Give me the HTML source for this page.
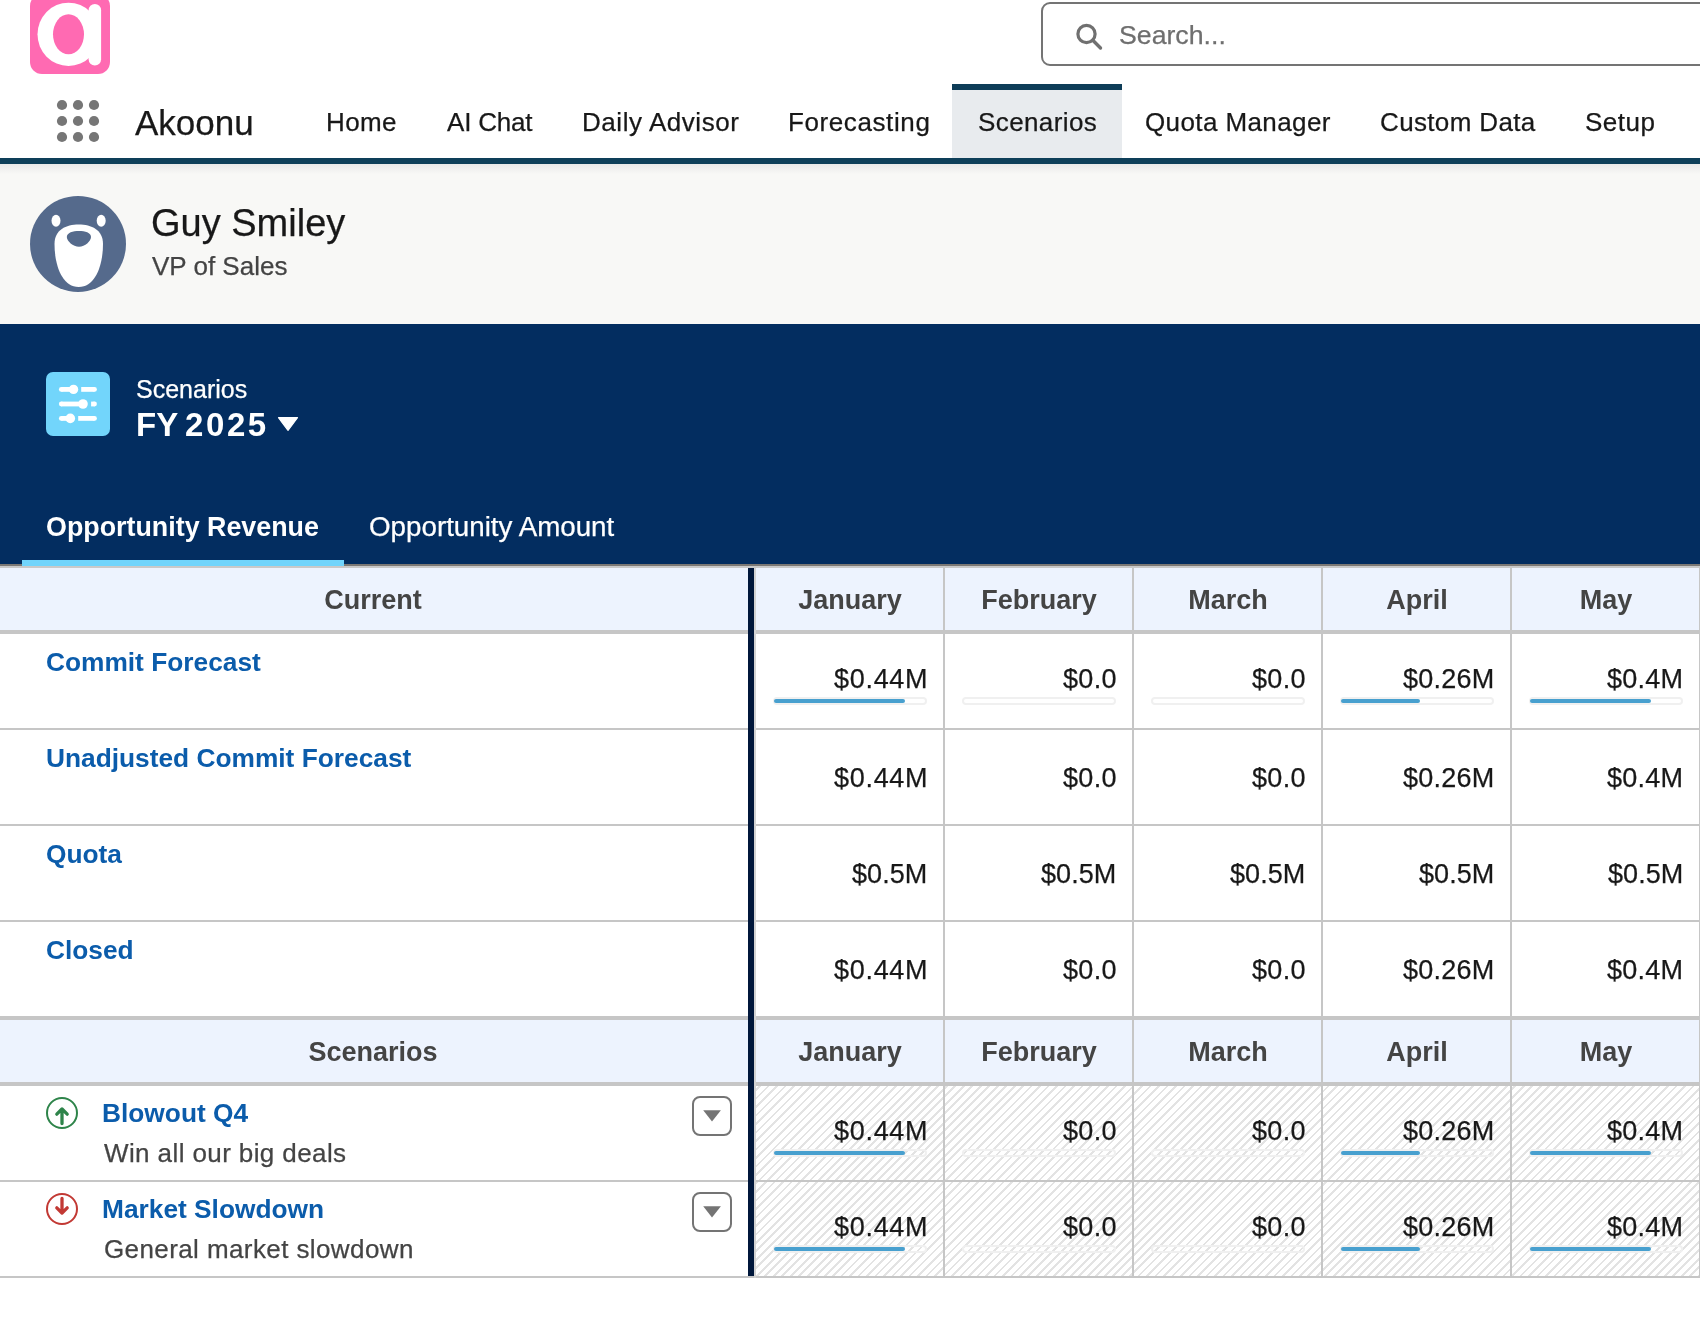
<!DOCTYPE html>
<html><head><meta charset="utf-8"><title>Scenarios</title>
<style>
html,body{margin:0;padding:0;}
body{width:1700px;height:1342px;position:relative;overflow:hidden;background:#fff;font-family:"Liberation Sans", sans-serif;}
.t{position:absolute;white-space:nowrap;will-change:transform;}
.t.n{-webkit-text-stroke:0.25px currentColor;}
svg{display:block}
</style></head><body>
<svg style="position:absolute;left:30px;top:-6px" width="80" height="80" viewBox="0 0 80 80">
<rect x="0" y="0" width="80" height="80" rx="12" fill="#ff6ab2"/>
<ellipse cx="38.5" cy="40.3" rx="31" ry="31.6" fill="#fff"/>
<ellipse cx="38.5" cy="40.3" rx="15.5" ry="20" fill="#ff6ab2"/>
<rect x="58.6" y="9.9" width="12.5" height="61.7" rx="6.25" fill="#fff"/>
</svg>
<div style="position:absolute;left:1041px;top:2px;width:700px;height:60px;border:2px solid #747474;border-radius:9px;background:#fff"></div>
<svg style="position:absolute;left:1070px;top:18px" width="40" height="40" viewBox="0 0 40 40">
<circle cx="16.5" cy="16" r="8.6" fill="none" stroke="#707070" stroke-width="3.2"/>
<line x1="22.8" y1="22.3" x2="30.5" y2="30" stroke="#707070" stroke-width="3.4" stroke-linecap="round"/>
</svg>
<div class="t n" style="left:1119.00px;top:22.00px;font-size:26.7px;line-height:26.7px;color:#6f6f6f;font-weight:normal;">Search...</div>
<svg style="position:absolute;left:0;top:0" width="120" height="160"><circle cx="62" cy="105" r="5.1" fill="#767676"/><circle cx="78" cy="105" r="5.1" fill="#767676"/><circle cx="94" cy="105" r="5.1" fill="#767676"/><circle cx="62" cy="121" r="5.1" fill="#767676"/><circle cx="78" cy="121" r="5.1" fill="#767676"/><circle cx="94" cy="121" r="5.1" fill="#767676"/><circle cx="62" cy="137" r="5.1" fill="#767676"/><circle cx="78" cy="137" r="5.1" fill="#767676"/><circle cx="94" cy="137" r="5.1" fill="#767676"/></svg>
<div class="t n" style="left:135.00px;top:105.37px;font-size:35px;line-height:35px;color:#181818;font-weight:normal;">Akoonu</div>
<div style="position:absolute;left:952px;top:84px;width:170px;height:74px;background:#e8ebee"></div>
<div style="position:absolute;left:952px;top:84px;width:170px;height:6px;background:#0e3d58"></div>
<div class="t n" style="left:326.40px;top:109.19px;font-size:26px;line-height:26px;color:#181818;font-weight:normal;letter-spacing:0.4px;">Home</div>
<div class="t n" style="left:446.50px;top:109.19px;font-size:26px;line-height:26px;color:#181818;font-weight:normal;letter-spacing:-0.2px;">AI Chat</div>
<div class="t n" style="left:581.80px;top:109.19px;font-size:26px;line-height:26px;color:#181818;font-weight:normal;letter-spacing:0.55px;">Daily Advisor</div>
<div class="t n" style="left:787.70px;top:109.19px;font-size:26px;line-height:26px;color:#181818;font-weight:normal;letter-spacing:0.6px;">Forecasting</div>
<div class="t n" style="left:977.80px;top:109.19px;font-size:26px;line-height:26px;color:#181818;font-weight:normal;letter-spacing:0.4px;">Scenarios</div>
<div class="t n" style="left:1144.90px;top:109.19px;font-size:26px;line-height:26px;color:#181818;font-weight:normal;letter-spacing:0.4px;">Quota Manager</div>
<div class="t n" style="left:1379.70px;top:109.19px;font-size:26px;line-height:26px;color:#181818;font-weight:normal;letter-spacing:0.35px;">Custom Data</div>
<div class="t n" style="left:1585.00px;top:109.19px;font-size:26px;line-height:26px;color:#181818;font-weight:normal;letter-spacing:0.5px;">Setup</div>
<div style="position:absolute;left:0;top:158px;width:1700px;height:6px;background:#0e3f59"></div>
<div style="position:absolute;left:0;top:164px;width:1700px;height:160px;background:#f8f8f6"></div>
<div style="position:absolute;left:0;top:164px;width:1700px;height:10px;background:linear-gradient(#e9e9e8,#f8f8f6)"></div>
<svg style="position:absolute;left:28px;top:194px" width="100" height="100" viewBox="0 0 100 100">
<circle cx="50" cy="49.9" r="48" fill="#556a8c"/>
<ellipse cx="28" cy="26.8" rx="4.5" ry="6" fill="#fff"/>
<ellipse cx="73.2" cy="26.8" rx="4.5" ry="6" fill="#fff"/>
<path d="M26.5 50 C26.5 36 38 30.6 50.7 30.6 C63.5 30.6 75 36 75 50 C75 70 68 93 50.7 93 C33.5 93 26.5 70 26.5 50 Z" fill="#fff"/>
<path d="M38.8 43 C38.8 38.5 45 36.9 51 36.9 C57 36.9 63 38.5 63 43 C63 47 57 52.8 51 52.8 C45 52.8 38.8 47 38.8 43 Z" fill="#556a8c"/>
</svg>
<div class="t n" style="left:151.00px;top:203.83px;font-size:38px;line-height:38px;color:#181818;font-weight:normal;">Guy Smiley</div>
<div class="t n" style="left:152.00px;top:253.19px;font-size:26px;line-height:26px;color:#444;font-weight:normal;">VP of Sales</div>
<div style="position:absolute;left:0;top:324px;width:1700px;height:240px;background:#032d60"></div>
<svg style="position:absolute;left:46px;top:372px" width="64" height="64" viewBox="0 0 64 64">
<rect width="64" height="64" rx="7" fill="#72d5fb"/>
<g fill="#fff">
<circle cx="15.3" cy="17.4" r="2.4"/><rect x="15.3" y="15" width="12" height="4.8"/><circle cx="27.5" cy="17.4" r="4.7"/>
<rect x="35.2" y="15" width="13.3" height="4.8"/><circle cx="48.5" cy="17.4" r="2.4"/>
<circle cx="15.3" cy="32" r="2.4"/><rect x="15.3" y="29.6" width="21.7" height="4.8"/><circle cx="37" cy="32" r="4.8"/>
<rect x="45.1" y="29.6" width="3.4" height="4.8"/><circle cx="48.5" cy="32" r="2.4"/>
<circle cx="15.3" cy="46.4" r="2.4"/><rect x="15.3" y="44" width="9" height="4.8"/><circle cx="24.3" cy="46.4" r="4.8"/>
<rect x="32.2" y="44" width="16.3" height="4.8"/><circle cx="48.5" cy="46.4" r="2.4"/>
</g>
</svg>
<div class="t n" style="left:136.30px;top:377.04px;font-size:25px;line-height:25px;color:#fff;font-weight:normal;">Scenarios</div>
<div class="t" style="left:136.00px;top:408.07px;font-size:33px;line-height:33px;color:#fff;font-weight:bold;">FY</div>
<div class="t" style="left:184.50px;top:408.07px;font-size:33px;line-height:33px;color:#fff;font-weight:bold;letter-spacing:2.6px;">2025</div>
<svg style="position:absolute;left:276px;top:415px" width="24" height="18" viewBox="0 0 24 18">
<path d="M2.5 2.7 L21.5 2.7 L12 15.3 Z" fill="#fff" stroke="#fff" stroke-width="1.2" stroke-linejoin="round"/>
</svg>
<div class="t" style="left:46.30px;top:514.47px;font-size:26.85px;line-height:26.85px;color:#fff;font-weight:bold;">Opportunity Revenue</div>
<div class="t n" style="left:368.60px;top:512.51px;font-size:27.75px;line-height:27.75px;color:#fff;font-weight:normal;">Opportunity Amount</div>
<div style="position:absolute;left:0;top:564px;width:1700px;height:2px;background:#7b7875"></div>
<div style="position:absolute;left:0;top:566px;width:1700px;height:2px;background:#c9c9c9"></div>
<div style="position:absolute;left:22px;top:560px;width:322px;height:6px;background:#71d4fb"></div>
<div style="position:absolute;left:0;top:568px;width:1700px;height:62px;background:#edf3fe"></div>
<div style="position:absolute;left:0;top:630px;width:1700px;height:4px;background:#c6c6c6"></div>
<div class="t" style="left:-27.00px;width:800px;text-align:center;top:587.14px;font-size:27px;line-height:27px;color:#444;font-weight:bold;">Current</div>
<div class="t" style="left:449.50px;width:800px;text-align:center;top:587.14px;font-size:27px;line-height:27px;color:#444;font-weight:bold;">January</div>
<div class="t" style="left:638.50px;width:800px;text-align:center;top:587.14px;font-size:27px;line-height:27px;color:#444;font-weight:bold;">February</div>
<div class="t" style="left:827.50px;width:800px;text-align:center;top:587.14px;font-size:27px;line-height:27px;color:#444;font-weight:bold;">March</div>
<div class="t" style="left:1016.50px;width:800px;text-align:center;top:587.14px;font-size:27px;line-height:27px;color:#444;font-weight:bold;">April</div>
<div class="t" style="left:1205.50px;width:800px;text-align:center;top:587.14px;font-size:27px;line-height:27px;color:#444;font-weight:bold;">May</div>
<div class="t" style="left:46.00px;top:648.54px;font-size:26.3px;line-height:26.3px;color:#0b5cab;font-weight:bold;">Commit Forecast</div>
<div class="t n" style="right:772.00px;top:665.84px;font-size:27px;line-height:27px;color:#181818;font-weight:normal;letter-spacing:0.7px;">$0.44M</div>
<div class="t n" style="right:583.40px;top:665.84px;font-size:27px;line-height:27px;color:#181818;font-weight:normal;letter-spacing:0.3px;">$0.0</div>
<div class="t n" style="right:394.40px;top:665.84px;font-size:27px;line-height:27px;color:#181818;font-weight:normal;letter-spacing:0.3px;">$0.0</div>
<div class="t n" style="right:205.45px;top:665.84px;font-size:27px;line-height:27px;color:#181818;font-weight:normal;letter-spacing:0.25px;">$0.26M</div>
<div class="t n" style="right:16.45px;top:665.84px;font-size:27px;line-height:27px;color:#181818;font-weight:normal;letter-spacing:0.25px;">$0.4M</div>
<div style="position:absolute;left:773px;top:697px;width:154px;height:8px;box-sizing:border-box;border:2px solid #f0f0f0;border-radius:4px;background:#fff"></div>
<div style="position:absolute;left:774px;top:699px;width:131.1px;height:4px;border-radius:2px;background:#48a0cf"></div>
<div style="position:absolute;left:962px;top:697px;width:154px;height:8px;box-sizing:border-box;border:2px solid #f0f0f0;border-radius:4px;background:#fff"></div>
<div style="position:absolute;left:1151px;top:697px;width:154px;height:8px;box-sizing:border-box;border:2px solid #f0f0f0;border-radius:4px;background:#fff"></div>
<div style="position:absolute;left:1340px;top:697px;width:154px;height:8px;box-sizing:border-box;border:2px solid #f0f0f0;border-radius:4px;background:#fff"></div>
<div style="position:absolute;left:1341px;top:699px;width:79.0px;height:4px;border-radius:2px;background:#48a0cf"></div>
<div style="position:absolute;left:1529px;top:697px;width:154px;height:8px;box-sizing:border-box;border:2px solid #f0f0f0;border-radius:4px;background:#fff"></div>
<div style="position:absolute;left:1530px;top:699px;width:121.0px;height:4px;border-radius:2px;background:#48a0cf"></div>
<div style="position:absolute;left:0;top:728px;width:1700px;height:2px;background:#c6c6c6"></div>
<div class="t" style="left:46.00px;top:744.54px;font-size:26.3px;line-height:26.3px;color:#0b5cab;font-weight:bold;">Unadjusted Commit Forecast</div>
<div class="t n" style="right:772.00px;top:765.44px;font-size:27px;line-height:27px;color:#181818;font-weight:normal;letter-spacing:0.7px;">$0.44M</div>
<div class="t n" style="right:583.40px;top:765.44px;font-size:27px;line-height:27px;color:#181818;font-weight:normal;letter-spacing:0.3px;">$0.0</div>
<div class="t n" style="right:394.40px;top:765.44px;font-size:27px;line-height:27px;color:#181818;font-weight:normal;letter-spacing:0.3px;">$0.0</div>
<div class="t n" style="right:205.45px;top:765.44px;font-size:27px;line-height:27px;color:#181818;font-weight:normal;letter-spacing:0.25px;">$0.26M</div>
<div class="t n" style="right:16.45px;top:765.44px;font-size:27px;line-height:27px;color:#181818;font-weight:normal;letter-spacing:0.25px;">$0.4M</div>
<div style="position:absolute;left:0;top:824px;width:1700px;height:2px;background:#c6c6c6"></div>
<div class="t" style="left:46.00px;top:840.54px;font-size:26.3px;line-height:26.3px;color:#0b5cab;font-weight:bold;">Quota</div>
<div class="t n" style="right:772.65px;top:861.44px;font-size:27px;line-height:27px;color:#181818;font-weight:normal;letter-spacing:0.05px;">$0.5M</div>
<div class="t n" style="right:583.65px;top:861.44px;font-size:27px;line-height:27px;color:#181818;font-weight:normal;letter-spacing:0.05px;">$0.5M</div>
<div class="t n" style="right:394.65px;top:861.44px;font-size:27px;line-height:27px;color:#181818;font-weight:normal;letter-spacing:0.05px;">$0.5M</div>
<div class="t n" style="right:205.65px;top:861.44px;font-size:27px;line-height:27px;color:#181818;font-weight:normal;letter-spacing:0.05px;">$0.5M</div>
<div class="t n" style="right:16.65px;top:861.44px;font-size:27px;line-height:27px;color:#181818;font-weight:normal;letter-spacing:0.05px;">$0.5M</div>
<div style="position:absolute;left:0;top:920px;width:1700px;height:2px;background:#c6c6c6"></div>
<div class="t" style="left:46.00px;top:936.54px;font-size:26.3px;line-height:26.3px;color:#0b5cab;font-weight:bold;">Closed</div>
<div class="t n" style="right:772.00px;top:957.44px;font-size:27px;line-height:27px;color:#181818;font-weight:normal;letter-spacing:0.7px;">$0.44M</div>
<div class="t n" style="right:583.40px;top:957.44px;font-size:27px;line-height:27px;color:#181818;font-weight:normal;letter-spacing:0.3px;">$0.0</div>
<div class="t n" style="right:394.40px;top:957.44px;font-size:27px;line-height:27px;color:#181818;font-weight:normal;letter-spacing:0.3px;">$0.0</div>
<div class="t n" style="right:205.45px;top:957.44px;font-size:27px;line-height:27px;color:#181818;font-weight:normal;letter-spacing:0.25px;">$0.26M</div>
<div class="t n" style="right:16.45px;top:957.44px;font-size:27px;line-height:27px;color:#181818;font-weight:normal;letter-spacing:0.25px;">$0.4M</div>
<div style="position:absolute;left:0;top:1016px;width:1700px;height:4px;background:#c6c6c6"></div>
<div style="position:absolute;left:0;top:1020px;width:1700px;height:62px;background:#edf3fe"></div>
<div style="position:absolute;left:0;top:1082px;width:1700px;height:4px;background:#c6c6c6"></div>
<div class="t" style="left:-27.00px;width:800px;text-align:center;top:1039.14px;font-size:27px;line-height:27px;color:#444;font-weight:bold;">Scenarios</div>
<div class="t" style="left:449.50px;width:800px;text-align:center;top:1039.14px;font-size:27px;line-height:27px;color:#444;font-weight:bold;">January</div>
<div class="t" style="left:638.50px;width:800px;text-align:center;top:1039.14px;font-size:27px;line-height:27px;color:#444;font-weight:bold;">February</div>
<div class="t" style="left:827.50px;width:800px;text-align:center;top:1039.14px;font-size:27px;line-height:27px;color:#444;font-weight:bold;">March</div>
<div class="t" style="left:1016.50px;width:800px;text-align:center;top:1039.14px;font-size:27px;line-height:27px;color:#444;font-weight:bold;">April</div>
<div class="t" style="left:1205.50px;width:800px;text-align:center;top:1039.14px;font-size:27px;line-height:27px;color:#444;font-weight:bold;">May</div>
<div style="position:absolute;left:754px;top:1086px;width:946px;height:190px;background:#fff repeating-linear-gradient(-45deg, #e3e3e3 0px, #e3e3e3 1.9px, #fff 1.9px, #fff 6px)"></div>
<svg style="position:absolute;left:44px;top:1095px" width="36" height="36" viewBox="0 0 36 36">
<circle cx="18" cy="18" r="15" fill="none" stroke="#2e844a" stroke-width="2"/>
<path d="M18 28.6 L18 14 M12.8 19.2 L18 14 L23.2 19.2" fill="none" stroke="#2e844a" stroke-width="3.3" stroke-linecap="round" stroke-linejoin="round"/>
</svg>
<div class="t" style="left:102.20px;top:1100.24px;font-size:26.3px;line-height:26.3px;color:#0b5cab;font-weight:bold;">Blowout Q4</div>
<div class="t n" style="left:103.80px;top:1139.59px;font-size:26px;line-height:26px;color:#444;font-weight:normal;letter-spacing:0.4px;">Win all our big deals</div>
<div style="position:absolute;left:692px;top:1096px;width:40px;height:40px;box-sizing:border-box;border:2px solid #747474;border-radius:8px;background:#fff"></div>
<svg style="position:absolute;left:692px;top:1096px" width="40" height="40" viewBox="0 0 40 40">
<path d="M11.2 14.2 L28.9 14.2 L20 25.6 Z" fill="#747474"/></svg>
<div class="t n" style="right:772.00px;top:1117.84px;font-size:27px;line-height:27px;color:#181818;font-weight:normal;letter-spacing:0.7px;">$0.44M</div>
<div class="t n" style="right:583.40px;top:1117.84px;font-size:27px;line-height:27px;color:#181818;font-weight:normal;letter-spacing:0.3px;">$0.0</div>
<div class="t n" style="right:394.40px;top:1117.84px;font-size:27px;line-height:27px;color:#181818;font-weight:normal;letter-spacing:0.3px;">$0.0</div>
<div class="t n" style="right:205.45px;top:1117.84px;font-size:27px;line-height:27px;color:#181818;font-weight:normal;letter-spacing:0.25px;">$0.26M</div>
<div class="t n" style="right:16.45px;top:1117.84px;font-size:27px;line-height:27px;color:#181818;font-weight:normal;letter-spacing:0.25px;">$0.4M</div>
<div style="position:absolute;left:773px;top:1149px;width:154px;height:8px;box-sizing:border-box;border:2px solid #f0f0f0;border-radius:4px;background:transparent"></div>
<div style="position:absolute;left:774px;top:1151px;width:131.1px;height:4px;border-radius:2px;background:#48a0cf"></div>
<div style="position:absolute;left:962px;top:1149px;width:154px;height:8px;box-sizing:border-box;border:2px solid #f0f0f0;border-radius:4px;background:transparent"></div>
<div style="position:absolute;left:1151px;top:1149px;width:154px;height:8px;box-sizing:border-box;border:2px solid #f0f0f0;border-radius:4px;background:transparent"></div>
<div style="position:absolute;left:1340px;top:1149px;width:154px;height:8px;box-sizing:border-box;border:2px solid #f0f0f0;border-radius:4px;background:transparent"></div>
<div style="position:absolute;left:1341px;top:1151px;width:79.0px;height:4px;border-radius:2px;background:#48a0cf"></div>
<div style="position:absolute;left:1529px;top:1149px;width:154px;height:8px;box-sizing:border-box;border:2px solid #f0f0f0;border-radius:4px;background:transparent"></div>
<div style="position:absolute;left:1530px;top:1151px;width:121.0px;height:4px;border-radius:2px;background:#48a0cf"></div>
<div style="position:absolute;left:0;top:1180px;width:1700px;height:2px;background:#c6c6c6"></div>
<svg style="position:absolute;left:44px;top:1191px" width="36" height="36" viewBox="0 0 36 36">
<circle cx="18" cy="18" r="15" fill="none" stroke="#c23934" stroke-width="2"/>
<path d="M18 7.4 L18 22 M12.8 16.8 L18 22 L23.2 16.8" fill="none" stroke="#c23934" stroke-width="3.3" stroke-linecap="round" stroke-linejoin="round"/>
</svg>
<div class="t" style="left:102.20px;top:1196.24px;font-size:26.3px;line-height:26.3px;color:#0b5cab;font-weight:bold;">Market Slowdown</div>
<div class="t n" style="left:103.80px;top:1235.59px;font-size:26px;line-height:26px;color:#444;font-weight:normal;letter-spacing:0.4px;">General market slowdown</div>
<div style="position:absolute;left:692px;top:1192px;width:40px;height:40px;box-sizing:border-box;border:2px solid #747474;border-radius:8px;background:#fff"></div>
<svg style="position:absolute;left:692px;top:1192px" width="40" height="40" viewBox="0 0 40 40">
<path d="M11.2 14.2 L28.9 14.2 L20 25.6 Z" fill="#747474"/></svg>
<div class="t n" style="right:772.00px;top:1213.84px;font-size:27px;line-height:27px;color:#181818;font-weight:normal;letter-spacing:0.7px;">$0.44M</div>
<div class="t n" style="right:583.40px;top:1213.84px;font-size:27px;line-height:27px;color:#181818;font-weight:normal;letter-spacing:0.3px;">$0.0</div>
<div class="t n" style="right:394.40px;top:1213.84px;font-size:27px;line-height:27px;color:#181818;font-weight:normal;letter-spacing:0.3px;">$0.0</div>
<div class="t n" style="right:205.45px;top:1213.84px;font-size:27px;line-height:27px;color:#181818;font-weight:normal;letter-spacing:0.25px;">$0.26M</div>
<div class="t n" style="right:16.45px;top:1213.84px;font-size:27px;line-height:27px;color:#181818;font-weight:normal;letter-spacing:0.25px;">$0.4M</div>
<div style="position:absolute;left:773px;top:1245px;width:154px;height:8px;box-sizing:border-box;border:2px solid #f0f0f0;border-radius:4px;background:transparent"></div>
<div style="position:absolute;left:774px;top:1247px;width:131.1px;height:4px;border-radius:2px;background:#48a0cf"></div>
<div style="position:absolute;left:962px;top:1245px;width:154px;height:8px;box-sizing:border-box;border:2px solid #f0f0f0;border-radius:4px;background:transparent"></div>
<div style="position:absolute;left:1151px;top:1245px;width:154px;height:8px;box-sizing:border-box;border:2px solid #f0f0f0;border-radius:4px;background:transparent"></div>
<div style="position:absolute;left:1340px;top:1245px;width:154px;height:8px;box-sizing:border-box;border:2px solid #f0f0f0;border-radius:4px;background:transparent"></div>
<div style="position:absolute;left:1341px;top:1247px;width:79.0px;height:4px;border-radius:2px;background:#48a0cf"></div>
<div style="position:absolute;left:1529px;top:1245px;width:154px;height:8px;box-sizing:border-box;border:2px solid #f0f0f0;border-radius:4px;background:transparent"></div>
<div style="position:absolute;left:1530px;top:1247px;width:121.0px;height:4px;border-radius:2px;background:#48a0cf"></div>
<div style="position:absolute;left:0;top:1276px;width:1700px;height:2px;background:#c6c6c6"></div>
<div style="position:absolute;left:943px;top:568px;width:2px;height:710px;background:#c6c6c6"></div>
<div style="position:absolute;left:1132px;top:568px;width:2px;height:710px;background:#c6c6c6"></div>
<div style="position:absolute;left:1321px;top:568px;width:2px;height:710px;background:#c6c6c6"></div>
<div style="position:absolute;left:1510px;top:568px;width:2px;height:710px;background:#c6c6c6"></div>
<div style="position:absolute;left:1699px;top:568px;width:2px;height:710px;background:#c6c6c6"></div>
<div style="position:absolute;left:754px;top:568px;width:2px;height:710px;background:#d2d2d2"></div>
<div style="position:absolute;left:748px;top:568px;width:6px;height:708px;background:#00173b"></div>
</body></html>
